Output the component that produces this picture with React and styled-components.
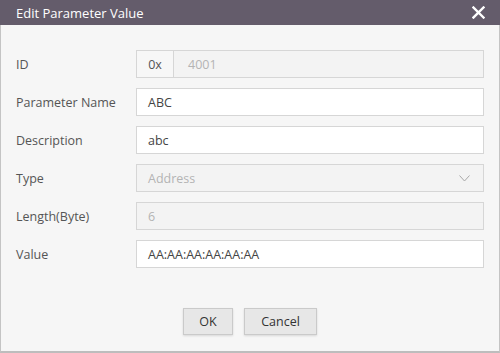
import React from "react";
import styled, { createGlobalStyle } from "styled-components";

const Global = createGlobalStyle`
  html, body { margin: 0; padding: 0; background: #ffffff; }
  * { box-sizing: border-box; }
`;

const Dialog = styled.div`
  width: 500px;
  height: 353px;
  display: flex;
  flex-direction: column;
  font-family: "Open Sans", "Noto Sans", sans-serif;
`;

const TitleBar = styled.div`
  height: 25px;
  flex: none;
  background: #645c6b;
  color: #ffffff;
  display: flex;
  align-items: center;
  justify-content: space-between;
  padding: 0 15px 0 16px;
  font-size: 13px;
  font-weight: 500;
`;

const CloseButton = styled.button`
  border: none;
  background: transparent;
  padding: 0;
  width: 14px;
  height: 14px;
  display: flex;
  align-items: center;
  justify-content: center;
  cursor: pointer;
`;

const Body = styled.div`
  flex: 1;
  background: #f6f6f6;
  border-left: 1px solid #c4c4c4;
  border-right: 1px solid #c4c4c4;
  border-bottom: 2px solid #bdbdbd;
  padding: 25px 15px 0 15px;
  display: flex;
  flex-direction: column;
`;

const Form = styled.div`
  display: flex;
  flex-direction: column;
  gap: 10px;
`;

const Row = styled.div`
  display: grid;
  grid-template-columns: 120px 348px;
  align-items: center;
  height: 28px;
`;

const Label = styled.label`
  font-size: 12.5px;
  color: #555555;
`;

const Field = styled.div`
  height: 28px;
  border: 1px solid #d6d6d6;
  background: ${(p) => (p.$disabled ? "#f3f3f3" : "#ffffff")};
  color: ${(p) => (p.$disabled ? "#b4b4b4" : "#444444")};
  display: flex;
  align-items: center;
  font-size: 12.5px;
  position: relative;
`;

const Prefix = styled.span`
  width: 37px;
  height: 100%;
  display: flex;
  align-items: center;
  justify-content: center;
  border-right: 1px solid #d6d6d6;
  background: #f7f7f7;
  color: #555555;
`;

const FieldText = styled.span`
  padding-left: ${(p) => p.$pad || 11}px;
  flex: 1;
`;

const Chevron = styled.svg`
  margin-right: 13px;
`;

const Footer = styled.div`
  margin-top: 40px;
  display: flex;
  justify-content: center;
  gap: 11px;
`;

const Button = styled.button`
  height: 27px;
  width: ${(p) => p.$w}px;
  background: #e7e7e7;
  border: 1px solid #cacaca;
  box-shadow: 0 1px 2px rgba(0, 0, 0, 0.12);
  font-family: "Open Sans", "Noto Sans", sans-serif;
  font-size: 12.5px;
  color: #333333;
  padding: 0;
  cursor: pointer;
`;

export default function App() {
  return (
    <>
      <Global />
      <Dialog>
        <TitleBar>
          <span>Edit Parameter Value</span>
          <CloseButton aria-label="Close">
            <svg width="13" height="13" viewBox="0 0 13 13">
              <path d="M1.5 1.5 L11.5 11.5 M11.5 1.5 L1.5 11.5" stroke="#ffffff" strokeWidth="2.4" strokeLinecap="square" />
            </svg>
          </CloseButton>
        </TitleBar>
        <Body>
          <Form>
            <Row>
              <Label>ID</Label>
              <Field $disabled>
                <Prefix>0x</Prefix>
                <FieldText $pad={14}>4001</FieldText>
              </Field>
            </Row>
            <Row>
              <Label>Parameter Name</Label>
              <Field>
                <FieldText>ABC</FieldText>
              </Field>
            </Row>
            <Row>
              <Label>Description</Label>
              <Field>
                <FieldText>abc</FieldText>
              </Field>
            </Row>
            <Row>
              <Label>Type</Label>
              <Field $disabled>
                <FieldText>Address</FieldText>
                <Chevron width="11" height="7" viewBox="0 0 11 7">
                  <path d="M0.5 0.5 L5.5 6 L10.5 0.5" fill="none" stroke="#a8a8a8" strokeWidth="1" />
                </Chevron>
              </Field>
            </Row>
            <Row>
              <Label>Length(Byte)</Label>
              <Field $disabled>
                <FieldText>6</FieldText>
              </Field>
            </Row>
            <Row>
              <Label>Value</Label>
              <Field>
                <FieldText>AA:AA:AA:AA:AA:AA</FieldText>
              </Field>
            </Row>
          </Form>
          <Footer>
            <Button $w={50}>OK</Button>
            <Button $w={73}>Cancel</Button>
          </Footer>
        </Body>
      </Dialog>
    </>
  );
}
